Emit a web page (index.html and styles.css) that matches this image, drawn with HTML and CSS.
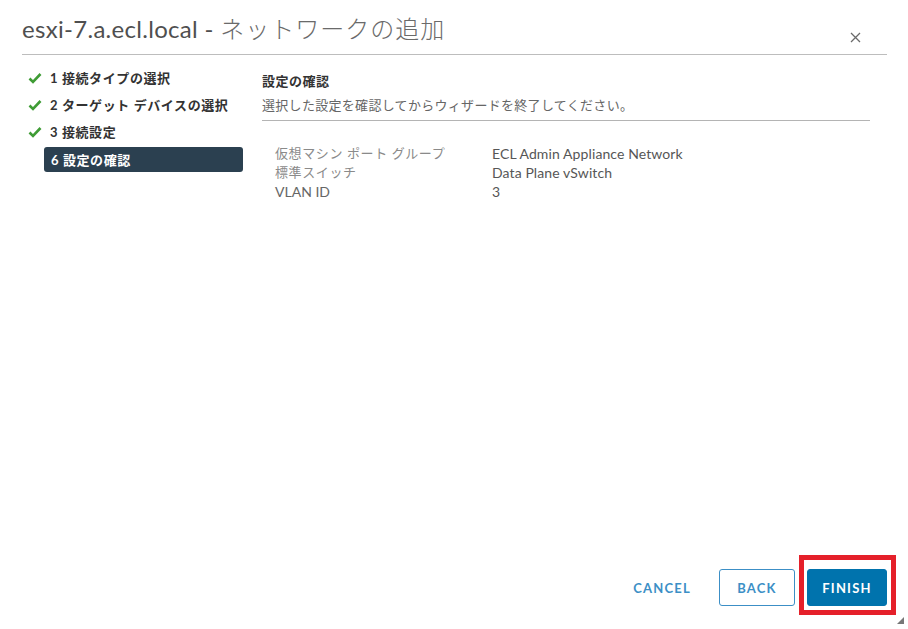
FILE: index.html
```html
<!DOCTYPE html>
<html lang="ja">
<head>
<meta charset="utf-8">
<title>ネットワークの追加</title>
<link rel="stylesheet" href="styles.css">
</head>
<body>
<div class="modal">
  <header class="modal-header">
    <h1 class="modal-title">esxi-7.a.ecl.local - <span class="jp">ネットワークの追加</span></h1>
    <button class="close" aria-label="閉じる">
      <svg width="11" height="11" viewBox="0 0 11 11"><path d="M1 1 L10 10 M10 1 L1 10" stroke="#6a6a6a" stroke-width="1.3" fill="none"/></svg>
    </button>
  </header>
  <div class="modal-body">
    <nav class="steps">
      <div class="step done">
        <svg class="check" width="14" height="12" viewBox="0 0 14 12"><path d="M1.5 6.5 L5 10 L12.5 2" stroke="#3f9c35" stroke-width="2.6" fill="none"/></svg>
        <span>1 接続タイプの選択</span>
      </div>
      <div class="step done">
        <svg class="check" width="14" height="12" viewBox="0 0 14 12"><path d="M1.5 6.5 L5 10 L12.5 2" stroke="#3f9c35" stroke-width="2.6" fill="none"/></svg>
        <span>2 ターゲット デバイスの選択</span>
      </div>
      <div class="step done">
        <svg class="check" width="14" height="12" viewBox="0 0 14 12"><path d="M1.5 6.5 L5 10 L12.5 2" stroke="#3f9c35" stroke-width="2.6" fill="none"/></svg>
        <span>3 接続設定</span>
      </div>
      <div class="step active"><span>6 設定の確認</span></div>
    </nav>
    <section class="content">
      <div class="content-head">
        <h2 class="content-title">設定の確認</h2>
        <p class="content-sub">選択した設定を確認してからウィザードを終了してください。</p>
      </div>
      <dl class="summary">
        <div class="row"><dt>仮想マシン ポート グループ</dt><dd>ECL Admin Appliance Network</dd></div>
        <div class="row"><dt>標準スイッチ</dt><dd>Data Plane vSwitch</dd></div>
        <div class="row"><dt class="latin">VLAN ID</dt><dd>3</dd></div>
      </dl>
    </section>
  </div>
  <footer class="modal-footer">
    <button class="btn btn-link">CANCEL</button>
    <button class="btn btn-outline">BACK</button>
    <div class="highlight-wrap">
      <button class="btn btn-primary">FINISH</button>
      <span class="highlight"></span>
    </div>
  </footer>
  <span class="grip"></span>
</div>
</body>
</html>
```

FILE: styles.css
```css
* { box-sizing: border-box; }
html, body { margin: 0; padding: 0; background: #fff; }
body {
  font-family: "Lato", "Noto Sans CJK JP", sans-serif;
  color: #333;
}
.modal {
  position: relative;
  width: 908px;
  height: 629px;
  display: flex;
  flex-direction: column;
  overflow: hidden;
}
.modal-header {
  display: flex;
  align-items: flex-end;
  margin: 0 21px 0 22px;
  padding: 14px 0 10px;
  border-bottom: 1px solid #bdbdbd;
}
.modal-title {
  flex: 1;
  margin: 0;
  font-size: 24px;
  line-height: 30px;
  font-weight: 400;
  color: #4f4f4f;
  letter-spacing: 0.3px;
}
.modal-title .jp {
  font-weight: 300;
  color: #6a6a6a;
  letter-spacing: 1px;
}
.close {
  border: 0;
  background: none;
  padding: 0;
  margin: 0 26px 1px 0;
  width: 11px;
  height: 11px;
  display: flex;
}
.modal-body {
  flex: 1;
  display: flex;
  gap: 19px;
  padding-right: 38px;
}
.steps {
  width: 243px;
  padding: 9px 0 0 28px;
  display: flex;
  flex-direction: column;
}
.step {
  display: flex;
  align-items: center;
  height: 27px;
  font-size: 13px;
  font-weight: 700;
  letter-spacing: 0.6px;
  color: #333;
}
.step .check { margin-right: 8px; flex: none; }
.step.active {
  margin: 2px 0 0 16px;
  height: 25px;
  padding-left: 7px;
  background: #2b4050;
  color: #fff;
  border-radius: 3px;
}
.content {
  flex: 1;
  padding-top: 17px;
}
.content-head {
  padding-bottom: 6px;
  border-bottom: 1px solid #b4b4b4;
}
.content-title {
  margin: 0;
  font-size: 13px;
  line-height: 18px;
  font-weight: 700;
  letter-spacing: 0.5px;
  color: #333;
}
.content-sub {
  margin: 6px 0 0;
  font-size: 13px;
  line-height: 18px;
  letter-spacing: 0.3px;
  color: #666;
}
.summary {
  margin: 23px 0 0;
  padding-left: 13px;
}
.row {
  display: flex;
  font-size: 14px;
  line-height: 19px;
}
.row dt {
  width: 217px;
  color: #8a8a8a;
  font-size: 13px;
  letter-spacing: 0.6px;
}
.row dt.latin { color: #666; font-size: 14px; letter-spacing: 0; }
.row dd {
  margin: 0;
  color: #565656;
  letter-spacing: 0.1px;
}
.modal-footer {
  display: flex;
  justify-content: flex-end;
  align-items: center;
  padding: 0 21px 23px 0;
  gap: 12px;
}
.btn {
  font-family: "Lato", sans-serif;
  font-size: 13px;
  font-weight: 700;
  letter-spacing: 1.2px;
  height: 37px;
  border-radius: 3px;
  padding: 0;
  cursor: pointer;
}
.btn-link {
  border: 0;
  background: none;
  color: #3c8fc6;
  width: 84px;
  margin-right: 3px;
}
.btn-outline {
  width: 76px;
  background: #fff;
  border: 1px solid #3c8fc6;
  color: #3c8fc6;
}
.btn-primary {
  width: 80px;
  background: #0073ad;
  border: 1px solid #0073ad;
  color: #fff;
}
.highlight-wrap {
  position: relative;
  display: flex;
}
.highlight {
  position: absolute;
  left: -8px;
  right: -9px;
  top: -14px;
  bottom: -9px;
  border: 5px solid #e5202a;
  pointer-events: none;
}
.grip {
  position: absolute;
  right: 4px;
  bottom: 5px;
  width: 0;
  height: 0;
  border-left: 7px solid transparent;
  border-bottom: 7px solid #777;
}
```
